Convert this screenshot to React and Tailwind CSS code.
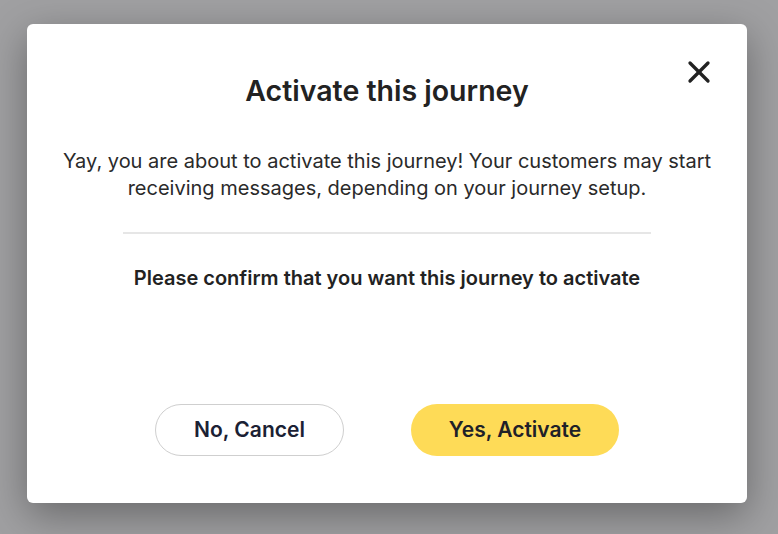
import { X } from 'lucide-react';

const font = { fontFamily: 'Inter, "Noto Sans", sans-serif' };

export default function App() {
  return (
    <div className="flex h-[534px] w-[778px] items-start bg-[#a0a0a2] pl-[27px] pt-[24px]" style={font}>
      <div className="relative flex h-[479px] w-[720px] flex-col items-center rounded-[6px] bg-white shadow-[0_12px_40px_rgba(0,0,0,0.35)]">
        <button type="button" className="absolute right-[30px] top-[30px] text-[#222]">
          <X size={36} strokeWidth={2.2} />
        </button>
        <h2 className="mt-[49px] text-[28.5px] font-semibold leading-[36px] text-[#222]">Activate this journey</h2>
        <p className="mt-[39px] w-[680px] text-center text-[20px] leading-[27px] text-[#2a2a2a]">
          Yay, you are about to activate this journey! Your customers may start receiving messages, depending on your
          journey setup.
        </p>
        <div className="mt-[30px] h-[2px] w-[528px] bg-[#e6e6e6]" />
        <p className="mt-[31px] text-[20px] font-semibold leading-[27px] text-[#222]">
          Please confirm that you want this journey to activate
        </p>
        <div className="mt-[112px] flex gap-[67px]">
          <button
            type="button"
            className="h-[52px] w-[189px] rounded-full border border-[#cfcfcf] bg-white text-[21px] font-semibold text-[#1b2134]"
          >
            No, Cancel
          </button>
          <button
            type="button"
            className="h-[52px] w-[208px] rounded-full bg-[#fedb57] text-[21px] font-semibold text-[#1f2128]"
          >
            Yes, Activate
          </button>
        </div>
      </div>
    </div>
  );
}
